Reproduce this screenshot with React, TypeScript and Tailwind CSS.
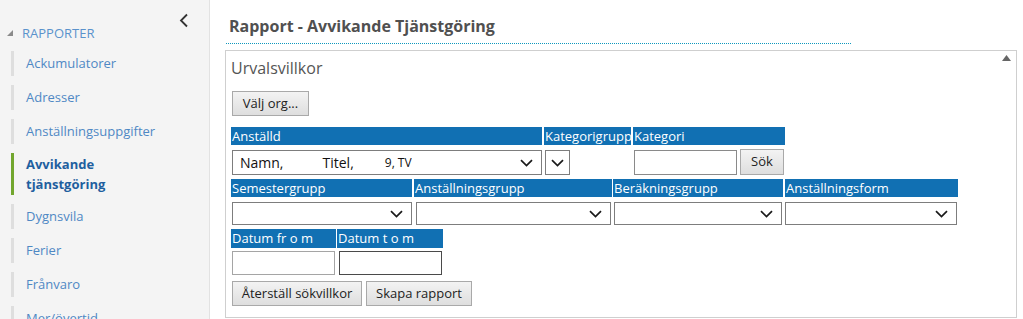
import React from "react";

const Chevron = () => (
  <svg width="13" height="8" viewBox="0 0 13 8" className="shrink-0">
    <path d="M1 1.2 L6.5 6.6 L12 1.2" fill="none" stroke="#1a1a1a" strokeWidth="1.7" />
  </svg>
);

function Sel({ className = "", children }: { className?: string; children?: React.ReactNode }) {
  return (
    <div
      className={`flex items-center justify-between border border-[#7d7d7d] bg-white pl-[7px] pr-[8px] ${className}`}
    >
      <div className="flex items-center overflow-hidden whitespace-nowrap">{children}</div>
      <Chevron />
    </div>
  );
}

function Hdr({ className = "", children }: { className?: string; children: React.ReactNode }) {
  return (
    <div
      className={`flex h-[18px] items-center bg-[#1170b3] pl-[1px] text-[13px] leading-none text-white ${className}`}
    >
      {children}
    </div>
  );
}

function Btn({ className = "", children }: { className?: string; children: React.ReactNode }) {
  return (
    <div
      className={`flex items-center justify-center border border-[#a9a9a9] bg-gradient-to-b from-[#f3f3f3] to-[#dedede] text-[13px] text-[#222] ${className}`}
    >
      {children}
    </div>
  );
}

const items = ["Ackumulatorer", "Adresser", "Anställningsuppgifter"];
const items2 = ["Dygnsvila", "Ferier", "Frånvaro", "Mer/övertid"];

export default function App() {
  return (
    <div
      className="flex h-[319px] w-[1023px] overflow-hidden bg-white"
      style={{ fontFamily: '"Open Sans", "Noto Sans", sans-serif' }}
    >
      {/* Sidebar */}
      <aside className="relative h-full w-[210px] shrink-0 border-r border-[#e2e2e2] bg-[#f4f4f4]">
        <svg
          className="absolute left-[179px] top-[13px]"
          width="10"
          height="15"
          viewBox="0 0 10 15"
        >
          <path d="M8 1.5 L2 7.5 L8 13.5" fill="none" stroke="#333" strokeWidth="1.8" />
        </svg>
        <div className="mt-[24px] flex h-[20px] items-center pl-[7px]">
          <svg width="6" height="6" viewBox="0 0 6 6" className="mr-[9px] -mt-[3px]">
            <path d="M6 0 L6 6 L0 6 Z" fill="#8a8a8a" />
          </svg>
          <span className="text-[13px] text-[#5a92cc]">RAPPORTER</span>
        </div>
        <div className="mt-[7px] flex flex-col gap-[9px] pl-[11px]">
          {items.map((t) => (
            <div
              key={t}
              className="flex h-[25px] items-center border-l-[3px] border-[#dedede] pl-[12px] text-[13px] text-[#4f88c4]"
            >
              {t}
            </div>
          ))}
          <div className="flex h-[42px] flex-col justify-center border-l-[3px] border-[#72a62e] pl-[12px] text-[13px] font-bold leading-[20px] text-[#1f5f9f]">
            <span>Avvikande</span>
            <span>tjänstgöring</span>
          </div>
          {items2.map((t) => (
            <div
              key={t}
              className="flex h-[25px] shrink-0 items-center border-l-[3px] border-[#dedede] pl-[12px] text-[13px] text-[#4f88c4]"
            >
              {t}
            </div>
          ))}
        </div>
      </aside>

      {/* Main */}
      <main className="flex-1 pl-[15px] pr-[6px]">
        <div className="ml-[1px] w-[625px] border-b border-dotted border-[#0f98bd] pt-[17px] pb-[8px]">
          <h1 className="pl-[3px] text-[16px] font-bold leading-[18px] text-[#505050]">
            Rapport - Avvikande Tjänstgöring
          </h1>
        </div>
        <section className="relative mt-[6px] h-[268px] border border-[#cfcfcf] pl-[5px] pt-[6px]">
          <svg className="absolute right-[5px] top-[4px]" width="9" height="6" viewBox="0 0 9 6">
            <path d="M0 6 L4.5 0 L9 6 Z" fill="#666" />
          </svg>
          <div className="text-[16px] leading-[22px] text-[#555]">Urvalsvillkor</div>

          <Btn className="mt-[12px] ml-[1px] h-[25px] w-[77px]">Välj org...</Btn>

          {/* Row 1 */}
          <div className="mt-[11px] flex">
            <Hdr className="w-[311px]">Anställd</Hdr>
            <Hdr className="ml-[2px] w-[87px]">Kategorigrupp</Hdr>
            <Hdr className="ml-[2px] w-[152px]">Kategori</Hdr>
          </div>
          <div className="mt-[5px] flex items-center">
            <Sel className="ml-[1px] h-[25px] w-[310px]">
              <span className="text-[14px] text-[#111]">Namn,</span>
              <span className="ml-[39px] text-[14px] text-[#111]">Titel,</span>
              <span className="ml-[31px] text-[12px] text-[#111]">9, TV</span>
            </Sel>
            <Sel className="ml-[3px] h-[25px] w-[25px] !px-[5px]" />
            <div className="ml-[64px] h-[25px] w-[103px] border border-[#8a8a8a] bg-white" />
            <Btn className="ml-[3px] -mt-[1px] h-[26px] w-[44px]">Sök</Btn>
          </div>

          {/* Row 2 */}
          <div className="mt-[4px] flex">
            <Hdr className="w-[181px]">Semestergrupp</Hdr>
            <Hdr className="ml-[2px] w-[198px]">Anställningsgrupp</Hdr>
            <Hdr className="ml-[1px] w-[170px]">Beräkningsgrupp</Hdr>
            <Hdr className="ml-[2px] w-[173px]">Anställningsform</Hdr>
          </div>
          <div className="mt-[5px] flex">
            <Sel className="ml-[1px] h-[23px] w-[180px]" />
            <Sel className="ml-[4px] h-[23px] w-[195px]" />
            <Sel className="ml-[3px] h-[23px] w-[168px]" />
            <Sel className="ml-[3px] h-[23px] w-[172px]" />
          </div>

          {/* Row 3 */}
          <div className="mt-[4px] flex">
            <Hdr className="h-[19px] w-[105px]">Datum fr o m</Hdr>
            <Hdr className="ml-[1px] h-[19px] w-[106px]">Datum t o m</Hdr>
          </div>
          <div className="mt-[3px] flex">
            <div className="ml-[1px] h-[24px] w-[103px] border border-[#a5a5a5] bg-white" />
            <div className="ml-[4px] h-[24px] w-[103px] border border-[#4a4a4a] bg-white" />
          </div>

          <div className="mt-[6px] flex">
            <Btn className="ml-[1px] h-[25px] w-[130px]">Återställ sökvillkor</Btn>
            <Btn className="ml-[4px] h-[25px] w-[106px]">Skapa rapport</Btn>
          </div>
        </section>
      </main>
    </div>
  );
}
